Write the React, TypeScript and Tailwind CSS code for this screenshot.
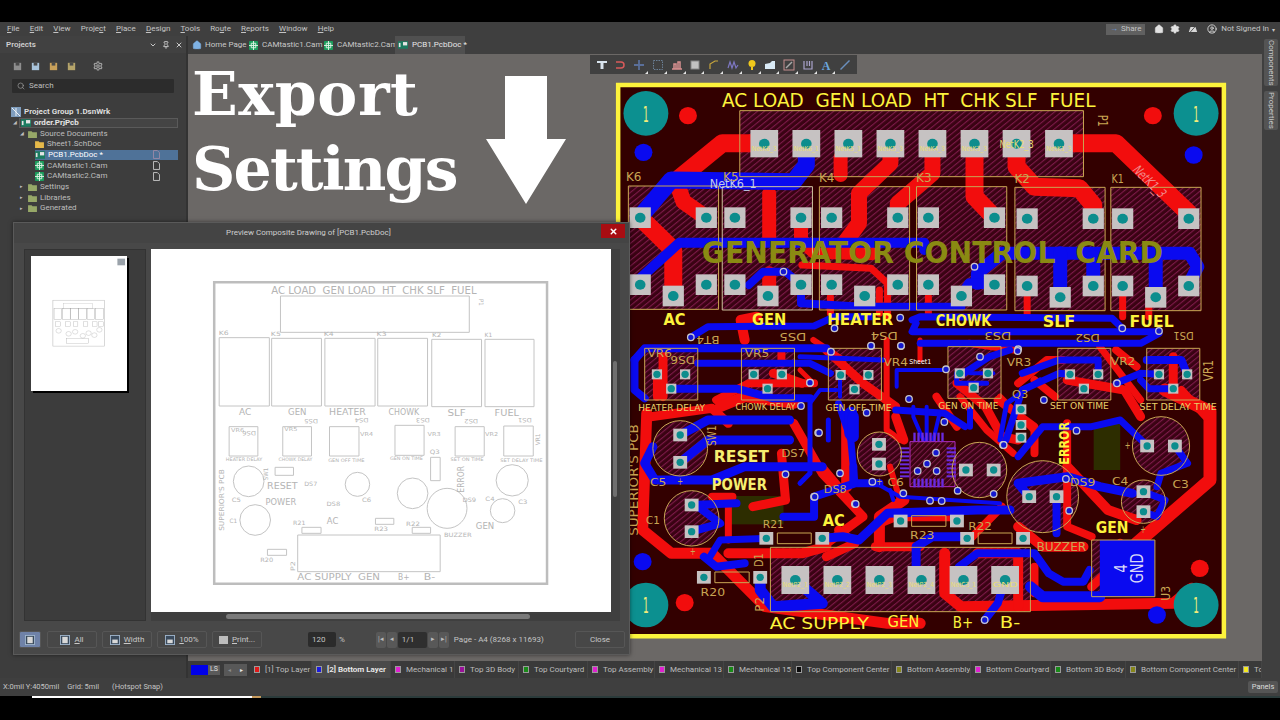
import * as React from 'react';
import { ChevronDown, CircleUser, Home, Pin, Search, Settings, X } from 'lucide-react';

const YEL = '#fdf33c';
const GOLD = '#c9a653';
const RED = '#f20d0d';
const BLUE = '#0a0af0';

// all board coordinates below are in the zoomed picture space: 2.45 per px across, 3 per px down
type Track = number[];

const redTop: Track[] = [
  [18, 378, 280, 275, 280, 170, 385],
  [16, 170, 420, 180, 455, 236, 503],
  [18, 74, 503, 155, 600, 155, 738],
  [14, 390, 430, 390, 560],
  [14, 390, 670, 390, 738],
  [14, 565, 322, 565, 375],
  [16, 687, 280, 687, 340, 610, 430, 610, 520, 580, 570],
  [16, 790, 280, 790, 370, 705, 460, 705, 503],
  [18, 893, 280, 893, 440, 942, 503],
  [18, 996, 280, 996, 350, 1040, 410, 1150, 415, 1184, 465, 1184, 506],
  [18, 1100, 280, 1240, 280, 1418, 490, 1418, 506],
  [14, 468, 503, 468, 570, 500, 605, 640, 610],
  [7, 470, 645, 640, 655, 680, 700, 680, 800],
  [7, 540, 740, 540, 790],
  [7, 660, 720, 660, 790],
  [7, 780, 740, 780, 790],
  [7, 900, 660, 900, 700],
  [7, 1022, 740, 1022, 800],
  [7, 1256, 740, 1256, 800],
  [7, 1320, 770, 1320, 800],
  [10, 330, 870, 320, 810, 360, 800],
];

const blueTop: Track[] = [
  [17, 481, 280, 481, 345, 450, 395, 150, 390, 74, 500],
  [10, 60, 700, 170, 578, 770, 578, 770, 600],
  [8, 340, 705, 375, 665, 430, 665, 468, 704, 468, 760, 620, 770, 861, 770, 861, 738],
  [13, 900, 700, 900, 670, 960, 610, 1420, 610, 1440, 650, 1418, 704],
  [14, 1103, 610, 1103, 742],
  [14, 1184, 620, 1184, 708],
  [14, 1337, 610, 1337, 742],
  [10, 942, 704, 880, 700, 860, 738],
  [7, 740, 810, 760, 800, 1230, 805, 1255, 835],
  [7, 200, 860, 240, 830, 500, 828, 550, 800, 640, 800],
  [7, 750, 820, 740, 845, 1150, 845, 1345, 845],
  [7, 760, 880, 1000, 880],
  [7, 1345, 850, 1300, 880, 1000, 880],
];

const redLow: Track[] = [
  [11, 90, 220, 80, 570, 150, 640, 250, 640, 380, 800, 680, 850, 760, 850],
  [9, 130, 40, 130, 170],
  [8, 260, 180, 340, 130, 500, 130],
  [11, 270, 200, 330, 170, 450, 190],
  [9, 450, 250, 520, 400, 620, 530, 520, 620],
  [11, 660, 620, 660, 530, 720, 480],
  [11, 820, 640, 820, 760, 860, 800, 1380, 790, 1425, 745],
  [13, 1360, 150, 1470, 215, 1470, 420, 1290, 610],
  [9, 1380, 50, 1380, 146],
  [8, 1120, 250, 1120, 560, 1180, 590],
  [8, 1000, 130, 1070, 60, 1110, 60],
  [8, 950, 180, 1040, 260, 1040, 340],
  [8, 880, 600, 960, 500],
  [9, 1000, 300, 960, 290, 920, 200, 850, 130],
  [8, 115, 103, 115, 170],
  [9, 530, 30, 620, 130, 700, 200],
  [7, 880, 10, 990, 30],
  [7, 1200, 20, 1300, 180],
  [9, 100, 230, 250, 205, 290, 250],
  [9, 560, 570, 600, 610, 530, 650],
  [10, 1120, 380, 1220, 510, 1290, 540],
  [7, 290, 470, 290, 600],
  [10, 290, 640, 470, 640, 530, 620],
  [9, 650, 620, 760, 620],
  [9, 660, 620, 660, 550, 700, 530, 850, 530],
  [10, 1000, 560, 1060, 620, 1160, 620],
  [10, 900, 640, 1000, 640, 1000, 800],
  [8, 1040, 680, 1040, 760],
  [9, 420, 340, 430, 480, 350, 500],
  [8, 250, 470, 300, 470],
  [9, 1250, 610, 1250, 660, 1180, 740],
  [9, 1120, 120, 1260, 150, 1300, 230],
  [8, 1400, 150, 1460, 230],
  [8, 1240, 30, 1290, 80],
  [8, 1040, 120, 1090, 170],
  [8, 800, 170, 850, 260],
  [8, 420, 30, 420, 70],
  [9, 400, 100, 470, 130],
  [9, 700, 230, 720, 300],
];

const blueLow: Track[] = [
  [8, 60, 60, 85, 25, 530, 25],
  [8, 60, 60, 60, 150, 85, 175],
  [7, 215, 70, 490, 70, 540, 100],
  [8, 150, 146, 310, 146, 400, 175, 490, 175],
  [9, 172, 285, 240, 240, 440, 240],
  [9, 172, 367, 240, 300, 440, 300],
  [9, 105, 320, 85, 370, 110, 420, 250, 420, 330, 380, 520, 380],
  [8, 200, 495, 310, 490],
  [8, 200, 575, 270, 550, 205, 490],
  [8, 230, 650, 260, 680, 330, 670],
  [7, 385, 595, 270, 600, 240, 660],
  [8, 425, 530, 500, 530, 500, 470, 600, 430, 660, 430],
  [9, 520, 595, 570, 590, 610, 600, 680, 520, 900, 510, 980, 510],
  [9, 750, 680, 750, 620, 790, 590, 870, 590],
  [8, 855, 680, 900, 640, 1040, 640, 1075, 700, 1110, 725, 1160, 725, 1175, 690],
  [8, 968, 720, 950, 790, 918, 840],
  [11, 454, 720, 520, 790, 400, 800, 368, 750, 368, 712],
  [11, 1030, 740, 1060, 770, 1200, 770],
  [9, 1027, 470, 1000, 430, 1120, 410, 1200, 440, 1280, 460],
  [8, 1094, 470, 1094, 580],
  [7, 970, 300, 1010, 150, 1100, 100, 1127, 103],
  [7, 1196, 103, 1196, 60, 1100, 60, 1010, 100],
  [7, 1240, 130, 1300, 100, 1345, 103],
  [8, 1315, 60, 1400, 60, 1414, 103],
  [7, 1380, 146, 1320, 146, 1300, 120],
  [7, 1317, 318, 1250, 240, 1180, 260, 1060, 260, 1000, 350],
  [7, 1384, 318, 1415, 370, 1350, 400, 1340, 440],
  [7, 1307, 455, 1360, 480, 1340, 530, 1307, 515],
  [7, 860, 105, 930, 50, 980, 30],
  [7, 870, 260, 820, 220, 700, 210],
  [7, 560, 190, 590, 300, 600, 430],
  [13, 590, 220, 590, 280],
];

// the dense middle, read from a tighter crop (3 per px both ways)
const redMid: Track[] = [
  [7, 480, 170, 560, 270, 640, 340],
  [6, 40, 0, 130, 60],
  [6, 260, 0, 260, 270, 300, 300],
  [6, 70, 380, 170, 500],
  [11, 140, 230, 140, 440],
  [5, 0, 90, 40, 130],
  [6, 270, 380, 300, 480],
  [6, 600, 170, 710, 280],
  [5, 360, 0, 360, 60],
];

const blueMid: Track[] = [
  [5, 0, 50, 250, 60],
  [5, 30, 180, 30, 400, 0, 430],
  [4, 30, 190, 60, 150, 110, 150],
  [4, 440, 90, 290, 90, 290, 140],
  [4, 120, 105, 120, 170],
  [5, 560, 130, 470, 130, 470, 100],
  [4, 340, 200, 340, 230, 370, 300],
  [4, 380, 200, 380, 300],
  [4, 420, 215, 400, 300],
  [6, 510, 210, 510, 260],
  [11, 160, 230, 160, 290],
  [8, 160, 380, 160, 430],
  [5, 85, 240, 85, 300],
  [4, 220, 425, 300, 470, 600, 490],
  [4, 580, 100, 510, 100],
  [5, 720, 120, 620, 190, 600, 300],
  [4, 270, 450, 280, 480],
];

const vias: number[][] = [
  [425, 665], [893, 650], [198, 862], [550, 835], [711, 803], [640, 888], [713, 888], [1255, 835], [1345, 843], [1000, 898],
  [490, 998], [468, 1068], [510, 1148], [430, 1273], [500, 1340], [600, 1362], [1063, 1050], [1143, 1142], [1117, 1287], [1125, 1382], [1242, 1000], [918, 1710], [963, 1185],
];

const viasMid: number[][] = [
  [30, 128], [93, 35], [213, 17], [303, 17], [438, 88], [540, 50], [653, 33], [327, 177], [200, 218], [433, 246],
  [57, 278], [120, 400], [217, 425], [310, 460], [390, 482], [425, 483], [473, 452], [581, 462], [611, 315], [408, 338], [381, 371], [353, 393], [410, 393], [44, 470], [167, 492],
];

const midX = (x: number) => 465.5 + x * 0.8167;

const Line = ({ t, c }: { t: Track; c: string }) => (
  <polyline
    points={t.slice(1).join(' ')}
    fill="none"
    stroke={c}
    strokeWidth={t[0]}
    strokeLinejoin="round"
    strokeLinecap="round"
    vectorEffect="non-scaling-stroke"
  />
);

const Pad = ({ x, y, w = 25, h = 30, label }: { x: number; y: number; w?: number; h?: number; label?: string }) => (
  <g>
    <rect x={x - w / 2} y={y - h / 2} width={w} height={h} fill="#c6c2c2" />
    <ellipse cx={x} cy={y} rx={w > 50 ? 13 : 9} ry={w > 50 ? 15 : 11} fill="#0c8d8d" />
    {label && <Lbl x={x} y={y + 14} w={w - 6} s={21} c="#e8dc78">{label}</Lbl>}
  </g>
);

function Lbl({ x, y, w, s, c = YEL, r = 0, b = false, children }: {
  x: number; y: number; w: number; s: number; c?: string; r?: number; b?: boolean; children: React.ReactNode;
}) {
  return (
    <text
      x={x}
      y={y}
      textLength={w}
      lengthAdjust="spacingAndGlyphs"
      fontSize={s}
      fill={c}
      fontWeight={b ? 700 : 400}
      textAnchor="middle"
      dominantBaseline="central"
      transform={r ? `rotate(${r} ${x} ${y})` : undefined}
      fontFamily="'DejaVu Sans', sans-serif"
      className="whitespace-pre"
    >
      {children}
    </text>
  );
}

const relays = [
  { x: 45, y: 408, h: 370, p: [74, 236, 155], py: [503, 704, 738], c: GOLD },
  { x: 275, y: 410, h: 370, p: [306, 468, 387], py: [503, 704, 738], c: '#cfc4a0' },
  { x: 513, y: 410, h: 370, p: [543, 705, 624], py: [503, 704, 738], c: GOLD },
  { x: 751, y: 410, h: 370, p: [780, 942, 861], py: [503, 704, 738], c: GOLD },
  { x: 992, y: 412, h: 370, p: [1022, 1184, 1103], py: [506, 708, 742], c: GOLD },
  { x: 1227, y: 412, h: 370, p: [1256, 1418, 1337], py: [506, 708, 742], c: GOLD },
];

const vrs = [
  { x: 85, y: 895, p: [115, 184, 150], py: 973 },
  { x: 322, y: 895, p: [352, 421, 386], py: 973 },
  { x: 535, y: 895, p: [565, 633, 599], py: 975 },
  { x: 828, y: 890, p: [857, 926, 891], py: 970 },
  { x: 1097, y: 895, p: [1127, 1196, 1161], py: 973 },
  { x: 1315, y: 895, p: [1345, 1414, 1380], py: 973 },
];

const caps = [
  [172, 1195, 67, 83, 172, 1155, 172, 1237],
  [200, 1405, 67, 83, 200, 1365, 200, 1445],
  [660, 1212, 54, 66, 659, 1183, 659, 1242],
  [905, 1260, 67, 83, 872, 1260, 940, 1260],
  [1060, 1340, 88, 108, 1027, 1340, 1094, 1340],
  [1350, 1188, 70, 88, 1316, 1188, 1384, 1188],
  [1307, 1355, 54, 65, 1307, 1325, 1307, 1385],
];

const resistors = [
  [383, 520, 1465],
  [712, 850, 1413],
  [875, 1012, 1465],
  [230, 368, 1582],
];

function Board() {
  return (
    <svg
      viewBox="0 0 1568 1770"
      preserveAspectRatio="none"
      className="absolute left-[610px] top-[50px] h-[590px] w-[640px]"
    >
      <defs>
        <pattern id="hatch" width="12" height="12" patternUnits="userSpaceOnUse" patternTransform="rotate(45)">
          <rect width="12" height="12" fill="#3a0313" />
          <rect width="3" height="12" fill="#7d1a4a" />
        </pattern>
      </defs>
      <rect x="20" y="105" width="1484" height="1654" fill="#330000" stroke={YEL} strokeWidth="4.5" vectorEffect="non-scaling-stroke" />

      {/* hatched bodies go under the copper */}
      <rect x="318" y="182" width="842" height="198" fill="url(#hatch)" />
      {relays.map((k) => (
        <rect key={k.x} x={k.x} y={k.y} width="221" height={k.h} fill="url(#hatch)" />
      ))}
      {vrs.map((v) => (
        <rect key={v.x} x={v.x} y={v.y} width="130" height="155" fill="url(#hatch)" />
      ))}
      {caps.map((c, i) => (
        <ellipse key={i} cx={c[0]} cy={c[1]} rx={c[2]} ry={c[3]} fill="url(#hatch)" />
      ))}
      <rect x="393" y="1492" width="637" height="193" fill="url(#hatch)" />
      <rect x="1180" y="1470" width="155" height="170" fill="url(#hatch)" />
      <rect x="295" y="1338" width="130" height="85" fill="#2d2d00" />
      <rect x="1185" y="1120" width="65" height="140" fill="#2d2d00" />

      {/* red copper */}
      {redTop.map((t, i) => <Line key={i} t={t} c={RED} />)}
      <g transform="translate(0 870)">
        {redLow.map((t, i) => <Line key={i} t={t} c={RED} />)}
      </g>
      <g transform="translate(465.5 870) scale(.8167 1)">
        {redMid.map((t, i) => <Line key={i} t={t} c={RED} />)}
      </g>

      {/* blue copper */}
      {blueTop.map((t, i) => <Line key={i} t={t} c={BLUE} />)}
      <g transform="translate(0 870)">
        {blueLow.map((t, i) => <Line key={i} t={t} c={BLUE} />)}
      </g>
      <g transform="translate(465.5 870) scale(.8167 1)">
        {blueMid.map((t, i) => <Line key={i} t={t} c={BLUE} />)}
      </g>
      <rect x="1200" y="1470" width="135" height="170" fill={BLUE} />

      {/* chip in the middle */}
      <g transform="translate(465.5 870) scale(.8167 1)" fill="#6a2ae0">
        <rect x="330" y="305" width="135" height="135" fill="url(#hatch)" stroke="#b02fc0" strokeWidth="1" vectorEffect="non-scaling-stroke" />
        {[0, 1, 2, 3, 4, 5, 6, 7].map((i) => (
          <g key={i}>
            <rect x={340 + i * 12} y="278" width="7" height="26" />
            <rect x={340 + i * 12} y="416" width="7" height="26" />
            <rect x="300" y={322 + i * 12} width="28" height="6" />
            <rect x="440" y={322 + i * 12} width="28" height="6" />
          </g>
        ))}
      </g>

      {/* mounting holes */}
      {[[88, 190], [1436, 190], [88, 1665], [1436, 1665]].map(([x, y]) => (
        <g key={x + y}>
          <ellipse cx={x} cy={y} rx="55" ry="67" fill="#0c9090" />
          <Lbl x={x} y={y + 4} w={14} s={62} c="#f3ec7a">1</Lbl>
        </g>
      ))}
      {[[191, 197, RED], [1330, 197, RED], [183, 1658, RED], [1445, 1555, RED], [82, 307, BLUE], [1430, 315, BLUE], [80, 1535, BLUE], [1340, 1695, BLUE]].map(([x, y, c]) => (
        <ellipse key={`${x}-${y}`} cx={x as number} cy={y as number} rx="22" ry="26" fill={c as string} />
      ))}

      {/* outlines */}
      <g fill="none" stroke={GOLD} strokeWidth="1" vectorEffect="non-scaling-stroke">
        <rect x="318" y="182" width="842" height="198" vectorEffect="non-scaling-stroke" />
        {relays.map((k) => (
          <rect key={k.x} x={k.x} y={k.y} width="221" height={k.h} stroke={k.c} vectorEffect="non-scaling-stroke" />
        ))}
        {vrs.map((v) => (
          <rect key={v.x} x={v.x} y={v.y} width="130" height="155" vectorEffect="non-scaling-stroke" />
        ))}
        {caps.map((c, i) => (
          <ellipse key={i} cx={c[0]} cy={c[1]} rx={c[2]} ry={c[3]} vectorEffect="non-scaling-stroke" />
        ))}
        <rect x="393" y="1492" width="637" height="193" vectorEffect="non-scaling-stroke" />
        <rect x="1180" y="1470" width="155" height="170" vectorEffect="non-scaling-stroke" />
        {resistors.map((r) => (
          <rect key={r[0]} x={r[0] + 27} y={r[2] - 16} width={r[1] - r[0] - 54} height="32" vectorEffect="non-scaling-stroke" />
        ))}
      </g>

      {/* vias */}
      {vias.map(([x, y]) => (
        <ellipse key={`${x}-${y}`} cx={x} cy={y} rx="8" ry="10" fill="#1418d0" stroke="#c8c6cc" strokeWidth="1.3" vectorEffect="non-scaling-stroke" />
      ))}
      {viasMid.map(([x, y]) => (
        <ellipse key={`${x}-${y}`} cx={midX(x)} cy={870 + y} rx="8" ry="10" fill="#1418d0" stroke="#c8c6cc" strokeWidth="1.3" vectorEffect="non-scaling-stroke" />
      ))}

      {/* pads */}
      {[378, 481, 584, 687, 790, 893, 996, 1100].map((x, i) => (
        <Pad key={x} x={x} y={281} w={68} h={82} label={['NetK6_3', 'NetK6_1', 'NetK5_1', 'NetK5_3', 'NetK4_3', 'NetK3_3', '', 'NetK1_3'][i]} />
      ))}
      {relays.map((k) => (
        <g key={k.x}>
          <Pad x={k.p[0]} y={k.py[0]} w={52} h={62} />
          <Pad x={k.p[1]} y={k.py[0]} w={52} h={62} />
          <Pad x={k.p[0]} y={k.py[1]} w={52} h={62} />
          <Pad x={k.p[1]} y={k.py[1]} w={52} h={62} />
          <Pad x={k.p[2]} y={k.py[2]} w={52} h={62} />
        </g>
      ))}
      {vrs.map((v) => (
        <g key={v.x}>
          <Pad x={v.p[0]} y={v.py} />
          <Pad x={v.p[1]} y={v.py} />
          <Pad x={v.p[2]} y={v.py + 43} />
        </g>
      ))}
      {caps.map((c, i) => (
        <g key={i}>
          <Pad x={c[4]} y={c[5]} w={34} h={38} />
          <Pad x={c[6]} y={c[7]} w={34} h={38} />
        </g>
      ))}
      {[1078, 1125, 1163].map((y) => <Pad key={y} x={1007} y={y} w={26} h={30} />)}
      {resistors.map((r) => (
        <g key={r[0]}>
          <Pad x={r[0]} y={r[2]} w={34} h={38} />
          <Pad x={r[1]} y={r[2]} w={34} h={38} />
        </g>
      ))}
      {[454, 557, 660, 763, 866, 968].map((x, i) => (
        <Pad key={x} x={x} y={1590} w={68} h={84} label={['NetP2_1', 'NetP2_2', 'NetP2_3', 'NetP2_4', 'NetC3_1', 'GND'][i]} />
      ))}

      {/* silk text */}
      <Lbl x={732} y={150} w={915} s={58}>AC LOAD  GEN LOAD  HT  CHK SLF  FUEL</Lbl>
      <Lbl x={790} y={607} w={1130} s={92} c="#8a8a12" b>GENERATOR CONTROL  CARD</Lbl>
      <Lbl x={302} y={400} w={115} s={38} c="#c2cbe8">NetK6_1</Lbl>
      <Lbl x={996} y={283} w={84} s={34} c="#e8dc78">NetK2_3</Lbl>
      <Lbl x={1322} y={395} w={110} s={36} c="#f08a8a" r={50}>NetK1_3</Lbl>
      <Lbl x={1208} y={212} w={36} s={34} c={GOLD} r={90}>P1</Lbl>
      <Lbl x={58} y={382} w={38} s={36} c={GOLD}>K6</Lbl>
      <Lbl x={296} y={380} w={38} s={36} c={GOLD}>K5</Lbl>
      <Lbl x={531} y={384} w={38} s={36} c={GOLD}>K4</Lbl>
      <Lbl x={769} y={384} w={38} s={36} c={GOLD}>K3</Lbl>
      <Lbl x={1010} y={386} w={38} s={36} c={GOLD}>K2</Lbl>
      <Lbl x={1244} y={386} w={30} s={36} c={GOLD}>K1</Lbl>

      <Lbl x={158} y={809} w={54} s={50} b>AC</Lbl>
      <Lbl x={390} y={808} w={84} s={50} b>GEN</Lbl>
      <Lbl x={613} y={809} w={162} s={50} b>HEATER</Lbl>
      <Lbl x={866} y={810} w={136} s={50} b>CHOWK</Lbl>
      <Lbl x={1100} y={815} w={80} s={50} b>SLF</Lbl>
      <Lbl x={1327} y={815} w={108} s={50} b>FUEL</Lbl>

      <Lbl x={448} y={860} w={66} s={32} c={GOLD} r={180}>DS5</Lbl>
      <Lbl x={672} y={858} w={66} s={32} c={GOLD} r={180}>DS4</Lbl>
      <Lbl x={950} y={856} w={66} s={32} c={GOLD} r={180}>DS3</Lbl>
      <Lbl x={1170} y={862} w={60} s={32} c={GOLD} r={180}>DS2</Lbl>
      <Lbl x={1405} y={856} w={50} s={32} c={GOLD} r={180}>DS1</Lbl>
      <Lbl x={240} y={868} w={56} s={30} c={GOLD} r={180}>BT4</Lbl>

      <g transform="translate(0 870)">
        <Lbl x={122} y={40} w={60} s={34} c={GOLD}>VR6</Lbl>
        <Lbl x={178} y={60} w={60} s={34} c={GOLD} r={180}>DS6</Lbl>
        <Lbl x={360} y={38} w={60} s={34} c={GOLD}>VR5</Lbl>
        <Lbl x={700} y={65} w={60} s={34} c={GOLD}>VR4</Lbl>
        <Lbl x={1002} y={65} w={60} s={34} c={GOLD}>VR3</Lbl>
        <Lbl x={1257} y={62} w={60} s={34} c={GOLD}>VR2</Lbl>
        <Lbl x={1465} y={92} w={64} s={34} c={GOLD} r={-90}>VR1</Lbl>
        <Lbl x={760} y={63} w={54} s={22} c="#ffffff">Sheet1</Lbl>
        <Lbl x={151} y={203} w={164} s={25} c="#e8d068">HEATER DELAY</Lbl>
        <Lbl x={381} y={200} w={147} s={25} c="#e8d068">CHOWK DELAY</Lbl>
        <Lbl x={609} y={205} w={162} s={25} c="#e8d068">GEN OFF TIME</Lbl>
        <Lbl x={878} y={197} w={147} s={25} c="#e8d068">GEN ON TIME</Lbl>
        <Lbl x={1150} y={198} w={144} s={25} c="#e8d068">SET ON TIME</Lbl>
        <Lbl x={1392} y={202} w={189} s={25} c="#e8d068">SET DELAY TIME</Lbl>
        <Lbl x={1005} y={162} w={40} s={34} c={GOLD}>Q3</Lbl>
        <Lbl x={250} y={287} w={62} s={30} c={GOLD} r={-90}>SW1</Lbl>
        <Lbl x={322} y={350} w={135} s={50} b c="#f6ee70">RESET</Lbl>
        <Lbl x={317} y={433} w={135} s={50} b c="#f6ee70">POWER</Lbl>
        <Lbl x={449} y={340} w={58} s={34} c={GOLD}>DS7</Lbl>
        <Lbl x={552} y={447} w={56} s={34} c={GOLD}>DS8</Lbl>
        <Lbl x={548} y={540} w={54} s={50} b>AC</Lbl>
        <Lbl x={1230} y={562} w={80} s={50} b>GEN</Lbl>
        <Lbl x={1113} y={310} w={128} s={34} r={-90} b>ERROR</Lbl>
        <Lbl x={1106} y={620} w={122} s={36} c={GOLD}>BUZZER</Lbl>
        <Lbl x={1158} y={425} w={62} s={34} c={GOLD}>DS9</Lbl>
        <Lbl x={118} y={425} w={40} s={34} c={GOLD}>C5</Lbl>
        <Lbl x={105} y={540} w={34} s={34} c={GOLD}>C1</Lbl>
        <Lbl x={700} y={425} w={40} s={34} c={GOLD}>C6</Lbl>
        <Lbl x={1250} y={423} w={40} s={34} c={GOLD}>C4</Lbl>
        <Lbl x={1398} y={432} w={40} s={34} c={GOLD}>C3</Lbl>
        <Lbl x={400} y={552} w={52} s={34} c={GOLD}>R21</Lbl>
        <Lbl x={765} y={585} w={60} s={34} c={GOLD}>R23</Lbl>
        <Lbl x={907} y={557} w={58} s={34} c={GOLD}>R22</Lbl>
        <Lbl x={252} y={755} w={60} s={34} c={GOLD}>R20</Lbl>
        <Lbl x={58} y={420} w={335} s={30} c={GOLD} r={-90}>SUPERIOR'S PCB</Lbl>
        <Lbl x={367} y={793} w={44} s={30} c={GOLD} r={-90}>P2</Lbl>
        <Lbl x={1362} y={760} w={44} s={30} c={GOLD} r={-90}>U3</Lbl>
        <Lbl x={365} y={660} w={40} s={28} c={GOLD} r={-90}>D1</Lbl>
        <Lbl x={513} y={850} w={243} s={50}>AC SUPPLY</Lbl>
        <Lbl x={719} y={845} w={78} s={50}>GEN</Lbl>
        <Lbl x={865} y={848} w={50} s={50}>B+</Lbl>
        <Lbl x={980} y={848} w={50} s={50}>B-</Lbl>
        <Lbl x={1252} y={685} w={26} s={44} c="#d8d8f8" r={-90}>4</Lbl>
        <Lbl x={1290} y={685} w={90} s={44} c="#d8d8f8" r={-90}>GND</Lbl>
        <Lbl x={172} y={425} w={14} s={30} c={GOLD}>+</Lbl>
        <Lbl x={203} y={635} w={14} s={30} c={GOLD}>+</Lbl>
        <Lbl x={660} y={425} w={14} s={30} c={GOLD}>+</Lbl>
        <Lbl x={1306} y={570} w={14} s={30} c={GOLD}>+</Lbl>
        <Lbl x={1268} y={318} w={14} s={30} c={GOLD}>+</Lbl>
      </g>
    </svg>
  );
}

function Floppy({ c = '#8e8e8e' }: { c?: string }) {
  return (
    <svg viewBox="0 0 12 12" className="h-[11px] w-[11px]">
      <rect x="2" y="2" width="8" height="8" fill={c} />
      <rect x="4" y="2" width="4" height="3" fill="#4a4a4a" />
    </svg>
  );
}

function FolderIcon({ c = '#97a868' }: { c?: string }) {
  return (
    <svg viewBox="0 0 10 9" className="h-[8px] w-[9px] shrink-0">
      <path d="M0 1.500h4l1 1h5v6.500H0z" fill={c} />
    </svg>
  );
}

function CamIcon() {
  return (
    <svg viewBox="0 0 10 10" className="h-[9px] w-[9px] shrink-0">
      <rect width="10" height="10" rx="1" fill="#1c9c5c" />
      <path d="M5 0v10M0 5h10M2.500 2.500h5v5h-5z" stroke="#e4f4e8" strokeWidth="1" fill="none" />
    </svg>
  );
}

function PcbIcon() {
  return (
    <svg viewBox="0 0 12 9" className="h-[8px] w-[10px] shrink-0">
      <rect width="12" height="9" fill="#1b7c60" />
      <rect x="1" y="2" width="2" height="5" fill="#e4e4e4" />
      <rect x="6" y="1" width="5" height="4" fill="#e4e4e4" />
    </svg>
  );
}

function DocIcon({ c = '#cfcfcf' }: { c?: string }) {
  return (
    <svg viewBox="0 0 8 10" className="h-[9px] w-[7px]">
      <path d="M.5.5h4.500l2.500 2.500V9.500H.5z" fill="none" stroke={c} />
    </svg>
  );
}

const tree = [
  { pad: 'pl-[11px]', icon: <svg viewBox="0 0 10 10" className="h-[10px] w-[10px] shrink-0"><rect width="10" height="10" fill="#7f9dbd" /><path d="M1 1l8 8M5 1v8" stroke="#ecf0f4" /></svg>, label: 'Project Group 1.DsnWrk', cls: 'font-bold text-[#dcdcdc]' },
  { pad: 'ml-[19px] pl-[1px]', arrow: '◢', icon: <PcbIcon />, label: 'order.PrjPcb', cls: 'font-bold text-[#e6e6e6]', row: 'border border-[#5a5a5a] bg-[#444444]' },
  { pad: 'pl-[28px]', arrow: '◢', icon: <FolderIcon />, label: 'Source Documents' },
  { pad: 'pl-[35px]', icon: <FolderIcon c="#e6b949" />, label: 'Sheet1.SchDoc' },
  { pad: 'ml-[35px]', icon: <PcbIcon />, label: 'PCB1.PcbDoc *', cls: 'text-white', row: 'bg-[#4f7298]', doc: '#a08ca8' },
  { pad: 'pl-[35px]', icon: <CamIcon />, label: 'CAMtastic1.Cam', doc: '#d0d0d0' },
  { pad: 'pl-[35px]', icon: <CamIcon />, label: 'CAMtastic2.Cam', doc: '#d0d0d0' },
  { pad: 'pl-[28px]', arrow: '▸', icon: <FolderIcon />, label: 'Settings' },
  { pad: 'pl-[28px]', arrow: '▸', icon: <FolderIcon />, label: 'Libraries' },
  { pad: 'pl-[28px]', arrow: '▸', icon: <FolderIcon />, label: 'Generated' },
];

function ProjectsPanel() {
  return (
    <aside className="flex w-[186px] shrink-0 flex-col bg-[#3d3d3d] text-[8px] text-[#bdbdbd]">
      <div className="flex h-[17px] shrink-0 items-center justify-between bg-[#414141] pl-[6px] pr-[3px]">
        <span className="font-semibold text-[#cfcfcf]">Projects</span>
        <div className="flex items-center gap-[5px] text-[#c8c8c8]">
          <ChevronDown size={8} strokeWidth={3} />
          <Pin size={8} strokeWidth={3} />
          <X size={8} strokeWidth={3} />
        </div>
      </div>
      <div className="flex h-[26px] shrink-0 items-center gap-[7px] pl-[12px]">
        <Floppy />
        <Floppy c="#a8c4dc" />
        <Floppy c="#c9a15a" />
        <Floppy c="#b5a46a" />
        <Settings size={10} className="ml-[9px] text-[#9c9c9c]" strokeWidth={3} />
      </div>
      <div className="mx-[12px] flex h-[14px] shrink-0 items-center gap-[4px] rounded-[1px] bg-[#2c2c2c] pl-[5px]">
        <Search size={8} className="text-[#a0a0a0]" />
        <span>Search</span>
      </div>
      <div className="mt-[14px] flex flex-col pr-[8px]">
        {tree.map((t) => (
          <div key={t.label} className={`relative flex h-[10.67px] items-center gap-[3px] ${t.pad} ${t.row ?? ''}`}>
            {t.arrow && <span className="absolute ml-[-8px] text-[5px] leading-none">{t.arrow}</span>}
            {t.icon}
            <span className={`whitespace-nowrap leading-none ${t.cls ?? ''}`}>{t.label}</span>
            {t.doc && <span className="absolute right-[18px] flex"><DocIcon c={t.doc} /></span>}
          </div>
        ))}
      </div>
    </aside>
  );
}

const menu = ['File', 'Edit', 'View', 'Project', 'Place', 'Design', 'Tools', 'Route', 'Reports', 'Window', 'Help'];
const mnemonic: Record<string, number> = { Project: 5, Route: 2 };

function MenuBar() {
  return (
    <div className="flex h-[14px] shrink-0 items-center justify-between bg-[#3f3f3f] pl-[7px] pr-[5px] text-[8px] text-[#c4c4c4]">
      <div className="flex gap-[10.1px]">
        {menu.map((m) => {
          const at = mnemonic[m] ?? 0;
          return (
            <span key={m}>
              {m.slice(0, at)}
              <u>{m[at]}</u>
              {m.slice(at + 1)}
            </span>
          );
        })}
      </div>
      <div className="flex items-center">
        <div className="flex h-[11px] w-[39px] items-center justify-center gap-[3px] bg-[#606060]">
          <span className="text-[#6b9de0]">→</span>
          <span>Share</span>
        </div>
        <div className="ml-[9px] flex items-center gap-[6px] text-[#e2e2e2]">
          <Home size={10} fill="#e2e2e2" strokeWidth={1} />
          <Settings size={10} fill="#e2e2e2" strokeWidth={2} />
          <svg viewBox="0 0 12 9" className="ml-[2px] h-[8px] w-[10px]"><path d="M1 8l2-6h6l2 6z" fill="#d8d8d8" /><path d="M2 9l8-9" stroke="#3f3f3f" /></svg>
        </div>
        <CircleUser size={10} className="ml-[9px] text-[#e2e2e2]" />
        <span className="ml-[4px] whitespace-nowrap">Not Signed In</span>
        <span className="ml-[3px] text-[6px]">▾</span>
      </div>
    </div>
  );
}

function TabBar() {
  return (
    <div className="flex h-[18px] shrink-0 items-center whitespace-nowrap bg-[#3f3f3f] text-[8px] text-[#c9c9c9]">
      <div className="flex w-[60px] items-center gap-[3px] pl-[4px]">
        <Home size={10} className="text-[#7fb2e4]" fill="#7fb2e4" strokeWidth={1} />
        <span>Home Page</span>
      </div>
      <div className="flex w-[75px] items-center gap-[4px] pl-[1px]"><CamIcon /><span>CAMtastic1.Cam</span></div>
      <div className="flex w-[72px] items-center gap-[4px] pl-[1px]"><CamIcon /><span>CAMtastic2.Cam</span></div>
      <div className="flex h-full w-[70px] items-center gap-[4px] bg-[#505050] pl-[3px] text-[#e6e6e6]"><PcbIcon /><span>PCB1.PcbDoc *</span></div>
    </div>
  );
}

const toolIcons: React.ReactNode[] = [
  <path key="a" d="M1 2h10v2H7.500v6h-3V4H1z" fill="#d9e4ee" />,
  <path key="b" d="M1 3h5a3 3 0 010 6H1M1 3h2M1 9h2" stroke="#d85a5a" strokeWidth="1.500" fill="none" />,
  <path key="c" d="M6 1v10M1 6h10" stroke="#5a6f9a" strokeWidth="1.800" />,
  <rect key="d" x="1.500" y="1.500" width="9" height="9" stroke="#6a7f95" fill="none" strokeDasharray="1.500 1" />,
  <path key="e" d="M1 10h10M3 10V5h2v5M7 10V3h2v7" stroke="#d89090" strokeWidth="1.500" fill="none" />,
  <rect key="f" x="2" y="2" width="8" height="8" fill="#c2c2c2" stroke="#888" />,
  <path key="g" d="M2 10V5l5-3h3" stroke="#c8a63c" strokeWidth="1.200" fill="none" />,
  <path key="h" d="M1 9l2-6 2 6 2-6 2 6 2-3" stroke="#7d77c2" strokeWidth="1.200" fill="none" />,
  <g key="i"><circle cx="6" cy="4.500" r="3.500" fill="#efc81c" /><rect x="5" y="8" width="2" height="3" fill="#efc81c" /></g>,
  <path key="j" d="M1 10V5l5-1 2-2h3v8z" fill="#d9eaf6" />,
  <g key="k"><rect x="1" y="1" width="10" height="10" fill="none" stroke="#c48d8d" /><path d="M3 9l6-6" stroke="#a9a9a9" strokeWidth="1.500" /></g>,
  <path key="l" d="M2 2v8h8V2M5 2v5M7.500 2v5" stroke="#aaa3cc" strokeWidth="1.200" fill="none" />,
  <text key="m" x="6" y="11" fontSize="12" fontWeight="700" textAnchor="middle" fill="#6ca6dc" fontFamily="'Liberation Serif', serif">A</text>,
  <path key="n" d="M1.500 10.500l9-9" stroke="#6a8fbe" strokeWidth="1.500" />,
];

function FloatingToolbar() {
  return (
    <div className="absolute left-[590px] top-[55px] flex h-[19px] w-[267px] items-center gap-[6.700px] bg-[#404040] pl-[6px]">
      {toolIcons.map((ic, i) => (
        <div key={i} className="relative h-[12px] w-[12px] shrink-0">
          <svg viewBox="0 0 12 12" className="h-[12px] w-[12px]">{ic}</svg>
          {i > 1 && i < 13 && (
            <svg viewBox="0 0 3 3" className="absolute -bottom-[3px] -right-[3px] h-[3px] w-[3px]"><path d="M3 0v3H0z" fill="#e4e4e4" /></svg>
          )}
        </div>
      ))}
    </div>
  );
}

function Thumb() {
  return (
    <div className="ml-[6px] mt-[6px] h-[135px] w-[96px] bg-white shadow-[2px_2px_0_#000]">
      <svg viewBox="0 0 250 406" preserveAspectRatio="none" className="h-full w-full">
        <rect x="225" y="8" width="20" height="20" fill="#9aa2aa" />
        <rect x="57" y="133" width="134" height="138" fill="none" stroke="#bbb" strokeWidth="1.500" />
        <rect x="85" y="143" width="75" height="16" fill="none" stroke="#bbb" />
        {[60, 82, 103, 124, 146, 168].map((x) => <rect key={x} x={x} y="158" width="20" height="32" fill="none" stroke="#999" />)}
        {[64, 90, 110, 136, 160, 176].map((x) => <rect key={x} x={x} y="198" width="12" height="15" fill="none" stroke="#aaa" />)}
        {[[72, 225], [98, 234], [115, 228], [135, 240], [150, 232], [165, 238], [178, 222]].map(([x, y]) => (
          <circle key={x} cx={x} cy={y} r="7" fill="none" stroke="#aaa" />
        ))}
        <rect x="92" y="248" width="58" height="15" fill="none" stroke="#aaa" />
      </svg>
    </div>
  );
}

// grey copy of the board, in zoom space of the preview crop
const PV = '#b4b4b4';
const previewRects = [
  [680, 168, 493, 109], [520, 293, 131, 205], [657, 295, 130, 203], [796, 295, 131, 203], [934, 295, 130, 203], [1075, 298, 130, 202], [1214, 298, 128, 202],
  [546, 560, 75, 88], [686, 560, 75, 88], [808, 560, 77, 88], [979, 556, 76, 90], [1136, 560, 76, 88], [1263, 558, 77, 90],
  [725, 885, 372, 110], [1072, 652, 25, 70], [736, 862, 50, 18], [928, 835, 48, 18], [1024, 862, 48, 18], [646, 928, 50, 18], [666, 682, 48, 24],
];
const previewCircles = [
  [597, 724, 40, 46], [614, 840, 40, 46], [881, 733, 32, 36], [1025, 760, 40, 46], [1115, 805, 52, 60], [1285, 721, 42, 47], [1260, 812, 32, 36],
];
const previewText: [number, number, number, number, string][] = [
  [924, 152, 536, 30, 'AC LOAD  GEN LOAD  HT  CHK SLF  FUEL'],
  [532, 280, 26, 18, 'K6'], [668, 282, 26, 18, 'K5'], [806, 282, 26, 18, 'K4'], [944, 282, 26, 18, 'K3'], [1088, 284, 24, 18, 'K2'], [1223, 284, 20, 18, 'K1'],
  [588, 515, 32, 27, 'AC'], [724, 515, 48, 27, 'GEN'], [855, 515, 96, 27, 'HEATER'], [1002, 515, 80, 27, 'CHOWK'], [1140, 517, 48, 27, 'SLF'], [1271, 517, 64, 27, 'FUEL'],
  [585, 658, 95, 14, 'HEATER DELAY'], [719, 656, 88, 14, 'CHOWK DELAY'], [852, 660, 95, 14, 'GEN OFF TIME'], [1009, 655, 86, 14, 'GEN ON TIME'], [1167, 656, 86, 14, 'SET ON TIME'], [1309, 659, 110, 14, 'SET DELAY TIME'],
  [685, 738, 80, 27, 'RESET'], [681, 785, 80, 27, 'POWER'], [759, 733, 34, 18, 'DS7'], [818, 792, 36, 18, 'DS8'], [816, 842, 30, 27, 'AC'], [1214, 856, 48, 27, 'GEN'], [1173, 780, 36, 18, 'DS9'],
  [1143, 886, 72, 18, 'BUZZER'], [1083, 636, 26, 18, 'Q3'], [565, 779, 24, 18, 'C5'], [557, 843, 20, 18, 'C1'], [905, 780, 24, 18, 'C6'], [1227, 778, 24, 18, 'C4'], [1313, 785, 24, 18, 'C3'],
  [729, 849, 32, 18, 'R21'], [943, 867, 36, 18, 'R23'], [1026, 851, 36, 18, 'R22'], [644, 961, 34, 18, 'R20'],
  [832, 1011, 216, 27, 'AC SUPPLY  GEN'], [1002, 1011, 30, 27, 'B+'], [1069, 1011, 30, 27, 'B-'],
];

function Preview() {
  return (
    <svg viewBox="342 27 1201 1089" preserveAspectRatio="none" className="h-full w-full bg-white">
      <rect x="507" y="127" width="869" height="904" fill="none" stroke="#bdbdbd" strokeWidth="2.500" vectorEffect="non-scaling-stroke" />
      {previewRects.map((r, i) => (
        <rect key={i} x={r[0]} y={r[1]} width={r[2]} height={r[3]} fill="none" stroke="#c4c4c4" strokeWidth="1" vectorEffect="non-scaling-stroke" />
      ))}
      {previewCircles.map((c, i) => (
        <ellipse key={i} cx={c[0]} cy={c[1]} rx={c[2]} ry={c[3]} fill="none" stroke="#c4c4c4" strokeWidth="1" vectorEffect="non-scaling-stroke" />
      ))}
      {previewText.map((t) => (
        <Lbl key={t[4] + t[0]} x={t[0]} y={t[1]} w={t[2]} s={t[3]} c={PV}>{t[4]}</Lbl>
      ))}
      <Lbl x={528} y={780} w={185} s={18} c={PV} r={-90}>SUPERIOR'S PCB</Lbl>
      <Lbl x={1150} y={718} w={80} s={24} c={PV} r={-90}>ERROR</Lbl>
      <Lbl x={1204} y={187} w={20} s={16} c={PV} r={90}>P1</Lbl>
      <Lbl x={642} y={702} w={38} s={16} c={PV} r={-90}>SW1</Lbl>
      <Lbl x={712} y={978} w={30} s={16} c={PV} r={-90}>P2</Lbl>
      <Lbl x={1352} y={598} w={36} s={16} c={PV} r={-90}>VR1</Lbl>
      {[[598, 580, 'DS6'], [760, 543, 'DS5'], [892, 541, 'DS4'], [1052, 540, 'DS3'], [1178, 543, 'DS2'], [1318, 540, 'DS1']].map(([x, y, s]) => (
        <Lbl key={s as string} x={x as number} y={y as number} w={36} s={18} c={PV} r={180}>{s}</Lbl>
      ))}
      {[[568, 569, 'VR6'], [707, 567, 'VR5'], [905, 582, 'VR4'], [1081, 582, 'VR3'], [1231, 582, 'VR2']].map(([x, y, s]) => (
        <Lbl key={s as string} x={x as number} y={y as number} w={34} s={16} c={PV}>{s}</Lbl>
      ))}
    </svg>
  );
}

function DlgButton({ w, icon, children }: { w: string; icon?: React.ReactNode; children?: React.ReactNode }) {
  return (
    <div className={`flex h-[17px] ${w} items-center justify-center gap-[4px] rounded-[2px] border border-[#565656] bg-[#474747] text-[#c8c8c8]`}>
      {icon}
      {children && <span>{children}</span>}
    </div>
  );
}

const PageIcon = ({ top }: { top?: boolean }) => (
  <svg viewBox="0 0 11 11" className="h-[10px] w-[10px]">
    <rect x=".5" y=".5" width="10" height="10" fill="#3a4a5c" stroke="#9fb5cc" />
    <rect x="2.500" y={top ? 5 : 2} width="6" height={top ? 4 : 7} fill="#d8d8d8" />
  </svg>
);

const NavBtn = ({ children }: { children: React.ReactNode }) => (
  <div className="flex h-[16px] w-[10px] items-center justify-center rounded-[2px] bg-[#585858] text-[7px] leading-none text-[#bcbcbc]">{children}</div>
);

function PreviewDialog() {
  return (
    <div className="absolute left-[13px] top-[222px] flex h-[433px] w-[617px] flex-col border border-[#5a5a5a] bg-[#484848] text-[8px] text-[#c4c4c4] shadow-[0_0_4px_rgba(0,0,0,0.5)]">
      <div className="relative flex h-[20px] shrink-0 items-center justify-center bg-[#444444] text-[#cfcfcf]">
        <span className="mr-[26px]">Preview Composite Drawing of [PCB1.PcbDoc]</span>
        <div className="absolute right-[4px] top-[1px] flex h-[14px] w-[24px] items-center justify-center bg-[#a80d12]">
          <X size={9} strokeWidth={4} className="text-white" />
        </div>
      </div>
      <div className="mt-[6px] flex h-[372px] gap-[5px] pl-[10px] pr-[9px]">
        <div className="w-[122px] shrink-0 border border-[#333333] bg-[#3c3c3c]">
          <Thumb />
        </div>
        <div className="flex flex-1 flex-col bg-[#3f3f3f]">
          <div className="flex h-[363px]">
            <div className="h-full w-[460px]"><Preview /></div>
            <div className="relative flex-1 bg-[#3f3f3f]">
              <div className="absolute left-[2px] top-[112px] h-[136px] w-[4px] rounded-full bg-[#6f6f6f]" />
            </div>
          </div>
          <div className="relative flex-1 bg-[#3f3f3f]">
            <div className="absolute left-[75px] top-[2px] h-[5px] w-[304px] rounded-full bg-[#7a7a7a]" />
          </div>
        </div>
      </div>
      <div className="mt-[10px] flex h-[17px] items-center pl-[5px] pr-[4px]">
        <div className="flex h-[17px] w-[22px] items-center justify-center rounded-[2px] border border-[#565656] bg-[#6f82a8]">
          <PageIcon />
        </div>
        <div className="ml-[6px] flex gap-[5px]">
          <DlgButton w="w-[50px]" icon={<PageIcon />}><u>A</u>ll</DlgButton>
          <DlgButton w="w-[50px]" icon={<PageIcon top />}><u>W</u>idth</DlgButton>
          <DlgButton w="w-[50px]" icon={<PageIcon top />}><u>1</u>00%</DlgButton>
          <DlgButton w="w-[50px]" icon={<span className="h-[8px] w-[9px] bg-[#bdbdbd]" />}><u>P</u>rint...</DlgButton>
        </div>
        <div className="ml-[46px] flex h-[15px] w-[28px] items-center rounded-[2px] bg-[#2b2b2b] pl-[4px]">120</div>
        <span className="ml-[3px]">%</span>
        <div className="ml-[31px] flex gap-[1px]">
          <NavBtn>|◂</NavBtn>
          <NavBtn>◂</NavBtn>
          <div className="flex h-[16px] w-[29px] items-center rounded-[2px] bg-[#2f2f2f] pl-[4px]">1/1</div>
          <NavBtn>▸</NavBtn>
          <NavBtn>▸|</NavBtn>
        </div>
        <span className="ml-[5px] whitespace-nowrap">Page - A4 (8268 x 11693)</span>
        <div className="ml-auto"><DlgButton w="w-[50px]">Close</DlgButton></div>
      </div>
    </div>
  );
}

const layers = [
  { w: 'w-[62px]', c: '#e01818', t: '[1] Top Layer' },
  { w: 'w-[79px]', c: '#1a1ae0', t: '[2] Bottom Layer', on: true },
  { w: 'w-[64px]', c: '#e020d0', t: 'Mechanical 1' },
  { w: 'w-[64px]', c: '#9a109a', t: 'Top 3D Body' },
  { w: 'w-[69px]', c: '#188a18', t: 'Top Courtyard' },
  { w: 'w-[67px]', c: '#e020d0', t: 'Top Assembly' },
  { w: 'w-[69px]', c: '#e020d0', t: 'Mechanical 13' },
  { w: 'w-[68px]', c: '#188a18', t: 'Mechanical 15' },
  { w: 'w-[100px]', c: '#0a0a0a', t: 'Top Component Center' },
  { w: 'w-[79px]', c: '#86861a', t: 'Bottom Assembly' },
  { w: 'w-[80px]', c: '#e020d0', t: 'Bottom Courtyard' },
  { w: 'w-[75px]', c: '#188a18', t: 'Bottom 3D Body' },
  { w: 'w-[113px]', c: '#86861a', t: 'Bottom Component Center' },
  { w: 'w-[23px]', c: '#f4e820', t: 'Top Overlay' },
];

function LayerBar() {
  return (
    <div className="flex h-[17px] shrink-0 items-center overflow-hidden bg-[#3a3a3a] pl-[3px] text-[8px] text-[#bdbdbd]">
      <div className="h-[10px] w-[17px] bg-[#0000e8]" />
      <div className="flex h-[10px] w-[12px] items-center justify-center bg-[#5a5a5a] text-[7px] text-[#e0e0e0]">LS</div>
      <div className="ml-[4px] flex h-[12px] w-[23px] items-center justify-around bg-[#585858] text-[6px] text-[#e8e8e8]">
        <span className="text-[#8a8a8a]">◂</span>
        <span>▸</span>
      </div>
      <div className="ml-[3px] flex">
        {layers.map((l) => (
          <div key={l.t} className={`flex h-[17px] ${l.w} shrink-0 items-center gap-[5px] overflow-hidden border-r border-[#444444] pl-[4px] ${l.on ? 'bg-[#4a4a4a] font-semibold text-[#ececec]' : ''}`}>
            <span className="h-[7px] w-[6px] shrink-0 border border-[#9a9a9a]" style={{ backgroundColor: l.c }} />
            <span className="whitespace-nowrap">{l.t}</span>
          </div>
        ))}
      </div>
    </div>
  );
}

function SideTabs() {
  return (
    <div className="flex w-[18px] shrink-0 flex-col items-center gap-[5px] bg-[#3f3f3f] pt-[3px] text-[8px] text-[#c8c8c8]">
      <div className="flex h-[47px] w-[14px] items-center justify-center rounded-[2px] bg-[#545454] [writing-mode:vertical-lr]">Components</div>
      <div className="flex h-[39px] w-[14px] items-center justify-center rounded-[2px] bg-[#545454] [writing-mode:vertical-lr]">Properties</div>
    </div>
  );
}

export default function App() {
  return (
    <div className="relative flex h-[720px] w-[1280px] flex-col overflow-hidden bg-black font-['Roboto',sans-serif]">
      <div className="h-[22px] shrink-0" />
      <MenuBar />
      <div className="flex min-h-0 flex-1">
        <ProjectsPanel />
        <div className="flex min-w-0 flex-1 flex-col border-l-[2px] border-[#333333]">
          <TabBar />
          <div className="flex-1 bg-[#6b6866]" />
          <LayerBar />
        </div>
        <SideTabs />
      </div>
      <div className="flex h-[18px] shrink-0 items-center justify-between bg-[#3f3f3f] pl-[3px] pr-[2px] text-[7.5px] text-[#c4c4c4]">
        <div className="flex">
          <span>X:0mil Y:4050mil</span>
          <span className="ml-[8px]">Grid: 5mil</span>
          <span className="ml-[13px]">(Hotspot Snap)</span>
        </div>
        <div className="flex h-[12px] w-[30px] items-center justify-center rounded-[2px] bg-[#555555] text-[#dcdcdc]">Panels</div>
      </div>
      <div className="h-[24px] shrink-0">
        <div className="flex h-[2px]">
          <div className="ml-[32px] w-[220px] bg-white" />
          <div className="w-[9px] bg-[#c69a5c]" />
          <div className="flex-1 bg-[#2b3b3b]" />
        </div>
      </div>

      {/* overlays on the document canvas */}
      <Board />
      <FloatingToolbar />
      <div className="absolute left-[192px] top-[57px] font-['DejaVu_Serif',serif] text-[60px] font-bold leading-[75px] text-white">
        <div className="tracking-[0.6px]">Export</div>
        <div className="tracking-[-1.8px]">Settings</div>
      </div>
      <svg viewBox="486 76 80 128" className="absolute left-[486px] top-[76px] h-[128px] w-[80px]">
        <path d="M505 76h42v63h19l-40 65-40-65h19z" fill="#ffffff" />
      </svg>
      <PreviewDialog />
    </div>
  );
}
